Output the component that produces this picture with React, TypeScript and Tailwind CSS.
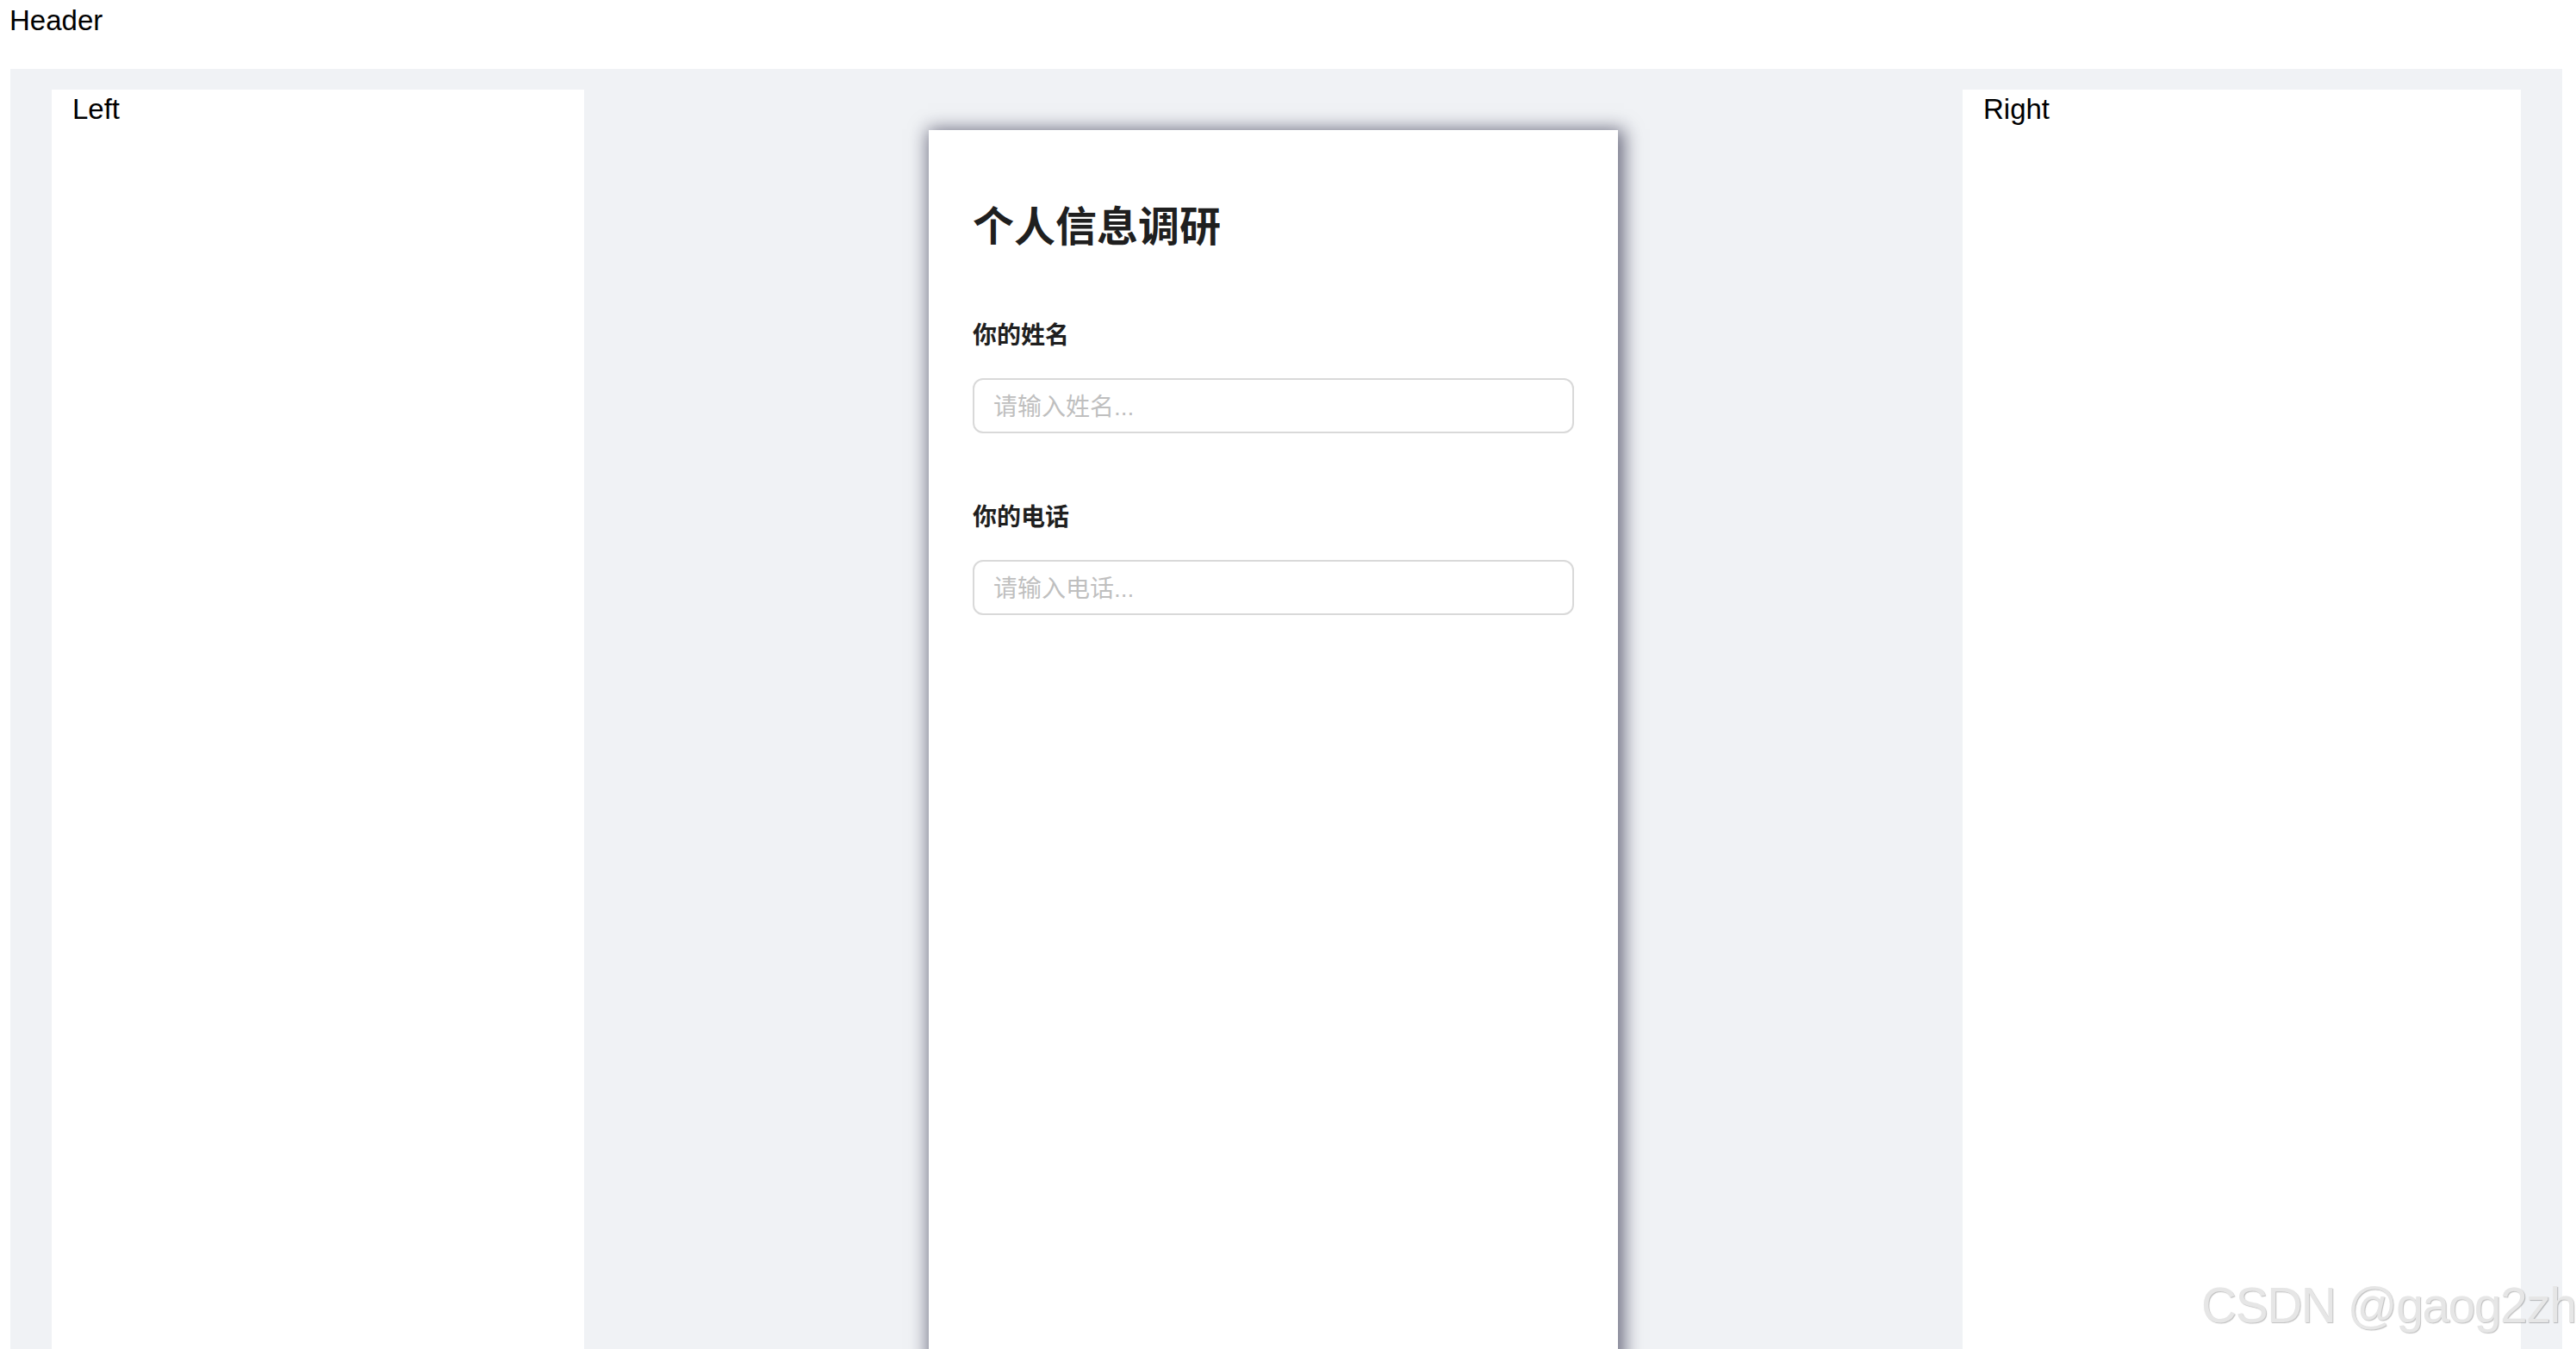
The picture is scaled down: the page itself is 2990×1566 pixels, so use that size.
import React from "react";

const latin = "font-['Liberation_Sans','Noto_Sans_CJK_SC',sans-serif]";
const cjk = "font-['Liberation_Sans','Noto_Sans_CJK_SC',sans-serif]";

function Field({ label, placeholder, first }: { label: string; placeholder: string; first?: boolean }) {
  return (
    <div className={first ? "mt-[69px] flex flex-col" : "mt-[77px] flex flex-col"}>
      <label className={`${cjk} text-[28px] leading-[42px] font-semibold text-[#1f1f1f]`}>{label}</label>
      <input
        type="text"
        placeholder={placeholder}
        className={`${cjk} mt-[28px] h-[64px] w-full rounded-[12px] border-2 border-[#d9d9d9] bg-white px-[22px] pt-[3px] text-[28px] text-[#1f1f1f] outline-none placeholder:text-[#bfbfbf]`}
      />
    </div>
  );
}

export default function App() {
  return (
    <div className={`${latin} relative flex h-[1566px] w-full flex-col overflow-hidden bg-white text-black`}>
      <div className="h-[80px] shrink-0 pl-[11px] text-[33px] leading-[48px]">Header</div>
      <div className="ml-[12px] mr-[16px] flex min-h-[1600px] bg-[#f0f2f5] px-[48px] pt-[24px]">
        <div className="w-[618px] shrink-0 bg-white pl-[24px] text-[33px] leading-[46px]">Left</div>
        <div className="flex flex-1 justify-center">
          <div className="mt-[47px] flex w-[800px] flex-col bg-white px-[51px] pt-[77px] shadow-[3px_3px_20px_4px_rgba(20,20,50,0.6)]">
            <h1 className={`${cjk} text-[48px] leading-[72px] font-bold text-[#1f1f1f]`}>个人信息调研</h1>
            <Field first label="你的姓名" placeholder="请输入姓名..." />
            <Field label="你的电话" placeholder="请输入电话..." />
          </div>
        </div>
        <div className="w-[648px] shrink-0 bg-white pl-[24px] text-[33px] leading-[46px]">Right</div>
      </div>
      <div className="pointer-events-none absolute left-[2555px] top-[1480px] whitespace-nowrap font-['Liberation_Sans',sans-serif] text-[57px] leading-[70px] tracking-[-1.5px] text-[#e6e6e6] [text-shadow:1px_1px_1px_rgba(0,0,0,0.25)]">
        CSDN @gaog2zh
      </div>
    </div>
  );
}
